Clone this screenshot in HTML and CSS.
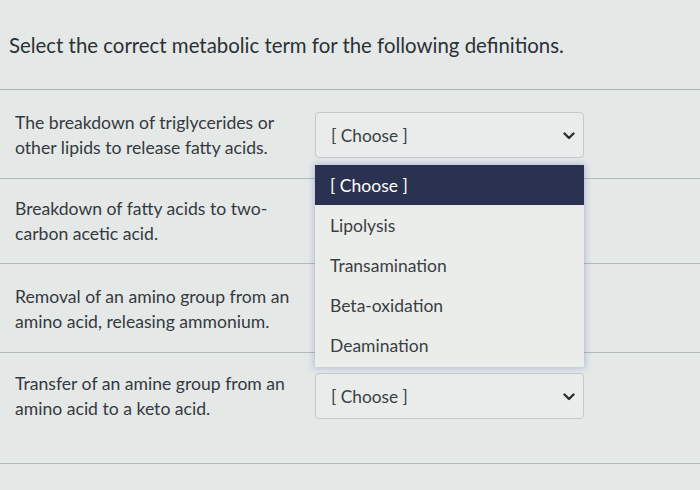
FILE: index.html
```html
<!DOCTYPE html>
<html>
<head>
<meta charset="utf-8">
<link rel="stylesheet" href="styles.css">
</head>
<body>
<div class="page">
  <div class="header">
    <p class="title">Select the correct metabolic term for the following definitions.</p>
  </div>
  <div class="row row1">
    <div class="term">The breakdown of triglycerides or<br>other lipids to release fatty acids.</div>
    <div class="select-wrap">
      <div class="select">
        <span class="value">[ Choose ]</span>
        <svg class="chev" width="12" height="8" viewBox="0 0 12 8"><path d="M1.5 1.5 L6 6 L10.5 1.5" fill="none" stroke="#2b2f33" stroke-width="2.4" stroke-linecap="round" stroke-linejoin="round"/></svg>
      </div>
      <ul class="menu">
        <li class="opt active">[ Choose ]</li>
        <li class="opt">Lipolysis</li>
        <li class="opt">Transamination</li>
        <li class="opt">Beta-oxidation</li>
        <li class="opt">Deamination</li>
      </ul>
    </div>
  </div>
  <div class="row row2">
    <div class="term">Breakdown of fatty acids to two-<br>carbon acetic acid.</div>
    <div class="select-wrap">
      <div class="select covered"></div>
    </div>
  </div>
  <div class="row row3">
    <div class="term">Removal of an amino group from an<br>amino acid, releasing ammonium.</div>
    <div class="select-wrap">
      <div class="select covered"></div>
    </div>
  </div>
  <div class="row row4">
    <div class="term">Transfer of an amine group from an<br>amino acid to a keto acid.</div>
    <div class="select-wrap">
      <div class="select">
        <span class="value">[ Choose ]</span>
        <svg class="chev" width="12" height="8" viewBox="0 0 12 8"><path d="M1.5 1.5 L6 6 L10.5 1.5" fill="none" stroke="#2b2f33" stroke-width="2.4" stroke-linecap="round" stroke-linejoin="round"/></svg>
      </div>
    </div>
  </div>
</div>
</body>
</html>
```
FILE: styles.css
```css
html, body {
  margin: 0;
  padding: 0;
}
body {
  background: #e4e8e7;
  font-family: Lato, "Open Sans", "Liberation Sans", sans-serif;
  color: #383d42;
  width: 700px;
  height: 490px;
  overflow: hidden;
}
.page {
  display: flex;
  flex-direction: column;
}
.header {
  height: 90px;
  border-bottom: 1px solid #aab2b6;
  box-sizing: border-box;
  padding: 33px 0 0 9px;
}
.title {
  margin: 0;
  font-size: 20.4px;
  line-height: 24px;
  color: #2c3135;
}
.row {
  display: flex;
  align-items: center;
  border-bottom: 1px solid #b2babe;
  box-sizing: border-box;
}
.row1 { height: 89px; padding-top: 2px; }
.row2 { height: 85px; }
.row3 { height: 89px; padding-top: 2px; }
.row4 { height: 111px; padding-bottom: 24px; }
.term {
  width: 300px;
  padding-left: 15px;
  font-size: 17.6px;
  line-height: 25px;
  color: #353a3f;
  flex-shrink: 0;
}
.select-wrap {
  position: relative;
  width: 269px;
}
.select {
  height: 46px;
  box-sizing: border-box;
  border: 1px solid #c3c9cd;
  border-radius: 4px;
  background: #e9ecea;
  display: flex;
  align-items: center;
  justify-content: space-between;
  padding: 0 8px 0 15px;
  font-size: 17.3px;
  color: #3a3f44;
}
.select.covered {
  visibility: hidden;
}
.chev {
  margin-top: 2px;
}
.menu {
  position: absolute;
  top: 53px;
  left: 0;
  width: 269px;
  margin: 0;
  padding: 0 0 2px 0;
  list-style: none;
  background: #ebedeb;
  box-shadow: 0 0 6px 1px rgba(80, 100, 190, 0.35);
  z-index: 5;
}
.opt {
  height: 40px;
  display: flex;
  align-items: center;
  padding-left: 15px;
  font-size: 17.5px;
  color: #3a3f44;
}
.opt.active {
  background: #2b3150;
  color: #ffffff;
}
```
